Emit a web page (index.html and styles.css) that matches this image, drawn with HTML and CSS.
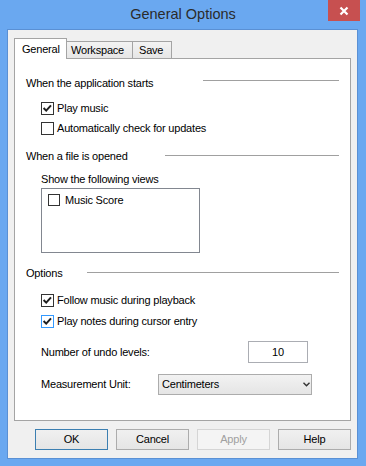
FILE: index.html
```html
<!DOCTYPE html>
<html>
<head>
<meta charset="utf-8">
<link rel="stylesheet" href="styles.css">
</head>
<body>
<div class="window">
  <div class="titlebar">
    <span class="title">General Options</span>
    <div class="close"><svg width="10" height="10" viewBox="0 0 10 10"><path d="M1.5 1.5 L8.5 8.5 M8.5 1.5 L1.5 8.5" stroke="#fff" stroke-width="2.2" fill="none"/></svg></div>
  </div>
  <div class="client">
    <div class="tabs">
      <div class="tab tab-general active">General</div>
      <div class="tab tab-workspace">Workspace</div>
      <div class="tab tab-save">Save</div>
    </div>
    <div class="panel">
      <div class="group-head">
        <span>When the application starts</span>
        <span class="rule rule-start"></span>
      </div>
      <div class="check-row row-play">
        <span class="cb checked"><svg width="11" height="11" viewBox="0 0 11 11"><path d="M1.6 5 L4.2 7.6 L9 2.4" stroke="#1e1e1e" stroke-width="2" fill="none"/></svg></span>
        <span>Play music</span>
      </div>
      <div class="check-row row-auto">
        <span class="cb"></span>
        <span>Automatically check for updates</span>
      </div>

      <div class="group-head head-file">
        <span>When a file is opened</span>
        <span class="rule rule-file"></span>
      </div>
      <div class="label-show">Show the following views</div>
      <div class="listbox">
        <div class="list-item">
          <span class="cb cb-small"></span>
          <span>Music Score</span>
        </div>
      </div>

      <div class="group-head head-options">
        <span>Options</span>
        <span class="rule rule-options"></span>
      </div>
      <div class="check-row row-follow">
        <span class="cb checked"><svg width="11" height="11" viewBox="0 0 11 11"><path d="M1.6 5 L4.2 7.6 L9 2.4" stroke="#1e1e1e" stroke-width="2" fill="none"/></svg></span>
        <span>Follow music during playback</span>
      </div>
      <div class="check-row row-notes">
        <span class="cb checked focus"><svg width="11" height="11" viewBox="0 0 11 11"><path d="M1.6 5 L4.2 7.6 L9 2.4" stroke="#1e1e1e" stroke-width="2" fill="none"/></svg></span>
        <span>Play notes during cursor entry</span>
      </div>

      <div class="field-row row-undo">
        <span class="label-undo">Number of undo levels:</span>
        <span class="textbox">10</span>
      </div>
      <div class="field-row row-unit">
        <span class="label-unit">Measurement Unit:</span>
        <span class="combo">
          <span class="combo-text">Centimeters</span>
          <svg class="chev" width="7" height="5" viewBox="0 0 7 5"><path d="M0.5 0.8 L3.5 3.8 L6.5 0.8" stroke="#333" stroke-width="1.4" fill="none"/></svg>
        </span>
      </div>
    </div>
    <div class="buttons">
      <div class="btn default">OK</div>
      <div class="btn">Cancel</div>
      <div class="btn disabled">Apply</div>
      <div class="btn">Help</div>
    </div>
  </div>
</div>
</body>
</html>
```

FILE: styles.css
```css
html, body {
  margin: 0;
  padding: 0;
}
body {
  width: 366px;
  height: 466px;
  overflow: hidden;
  font-family: "Liberation Sans", Arial, sans-serif;
  font-size: 11px;
  line-height: 13px;
  letter-spacing: -0.2px;
  color: #000;
}
.window {
  width: 366px;
  height: 466px;
  background: #6aa8f0;
  display: flex;
  flex-direction: column;
  box-sizing: border-box;
}
.titlebar {
  height: 29px;
  flex: none;
  position: relative;
  display: flex;
  justify-content: center;
  align-items: flex-start;
  box-sizing: border-box;
  padding-top: 6px;
}
.title {
  font-size: 14.5px;
  line-height: 17px;
  letter-spacing: 0;
  color: #2b2b2b;
}
.close {
  position: absolute;
  top: 0;
  right: 6px;
  width: 32px;
  height: 21px;
  background: #c75050;
  display: flex;
  align-items: center;
  justify-content: center;
}
.client {
  flex: 1;
  margin: 0 8px 7px 7px;
  border: 1px solid #5a90d4;
  background: #f0f0f0;
  display: flex;
  flex-direction: column;
  padding: 8px 6px 0 6px;
}
.tabs {
  display: flex;
  align-items: flex-end;
  height: 20px;
  position: relative;
  z-index: 1;
}
.tab {
  box-sizing: border-box;
  height: 17px;
  border: 1px solid #a4a4a4;
  border-bottom: none;
  background: linear-gradient(#f3f3f3, #e6e6e6);
  padding: 2px 0 0 4px;
}
.tab-general {
  width: 53px;
  padding-left: 7px;
}
.tab-workspace {
  width: 66px;
  border-left: none;
}
.tab-save {
  width: 39px;
  border-left: none;
  padding-left: 6px;
}
.tab.active {
  height: 21px;
  margin-bottom: -1px;
  background: #fff;
  padding-top: 4px;
}
.panel {
  position: relative;
  box-sizing: border-box;
  width: 337px;
  height: 363px;
  border: 1px solid #a4a4a4;
  background: #fff;
  display: flex;
  flex-direction: column;
  padding: 18px 11px 0 11px;
}
.group-head {
  display: flex;
  align-items: flex-start;
  height: 13px;
  position: relative;
}
.rule {
  margin-left: auto;
  height: 1px;
  background: #a0a0a0;
}
.rule-start {
  width: 136px;
  margin-top: 3px;
}
.rule-file {
  width: 174px;
  margin-top: 5px;
}
.rule-options {
  width: 252px;
  margin-top: 5px;
}
.check-row {
  display: flex;
  align-items: center;
  gap: 3px;
  height: 13px;
  margin-left: 15px;
  position: relative;
}
.row-play { margin-top: 12px; }
.row-auto { margin-top: 7px; }
.head-file { margin-top: 15px; }
.label-show {
  margin-top: 10px;
  margin-left: 15px;
  height: 13px;
}
.listbox {
  box-sizing: border-box;
  margin-top: 2px;
  margin-left: 15px;
  width: 159px;
  height: 65px;
  border: 1px solid #828790;
  background: #fff;
  padding: 5px 0 0 6px;
}
.list-item {
  display: flex;
  align-items: center;
  gap: 5px;
  height: 12px;
}
.head-options { margin-top: 14px; }
.row-follow { margin-top: 14px; }
.row-notes { margin-top: 8px; }
.cb {
  box-sizing: border-box;
  width: 13px;
  height: 13px;
  flex: none;
  border: 1px solid #333;
  background: #fff;
  display: flex;
  align-items: center;
  justify-content: center;
}
.cb.focus {
  border-color: #3399ff;
}
.cb-small {
  width: 12px;
  height: 12px;
}
.field-row {
  display: flex;
  align-items: center;
  margin-left: 15px;
}
.row-undo {
  margin-top: 13px;
  height: 22px;
}
.row-unit {
  margin-top: 11px;
  height: 21px;
}
.label-undo {
  width: 207px;
}
.label-unit {
  width: 117px;
}
.textbox {
  box-sizing: border-box;
  width: 60px;
  height: 22px;
  border: 1px solid #abadb3;
  background: #fff;
  display: flex;
  align-items: center;
  justify-content: center;
}
.combo {
  box-sizing: border-box;
  width: 154px;
  height: 21px;
  border: 1px solid #acacac;
  background: linear-gradient(#f2f2f2, #e5e5e5);
  display: flex;
  align-items: center;
  padding: 0 1px 0 3px;
}
.combo-text {
  flex: 1;
}
.chev {
  flex: none;
}
.buttons {
  display: flex;
  justify-content: flex-end;
  gap: 8px;
  margin-top: 8px;
  width: 337px;
}
.btn {
  box-sizing: border-box;
  width: 73px;
  height: 21px;
  border: 1px solid #acacac;
  background: linear-gradient(#f0f0f0, #e5e5e5);
  display: flex;
  align-items: center;
  justify-content: center;
}
.btn.default {
  border-color: #3c7fb1;
}
.btn.disabled {
  border-color: #d5d5d5;
  background: #f4f4f4;
  color: #a0a0a0;
}
```
